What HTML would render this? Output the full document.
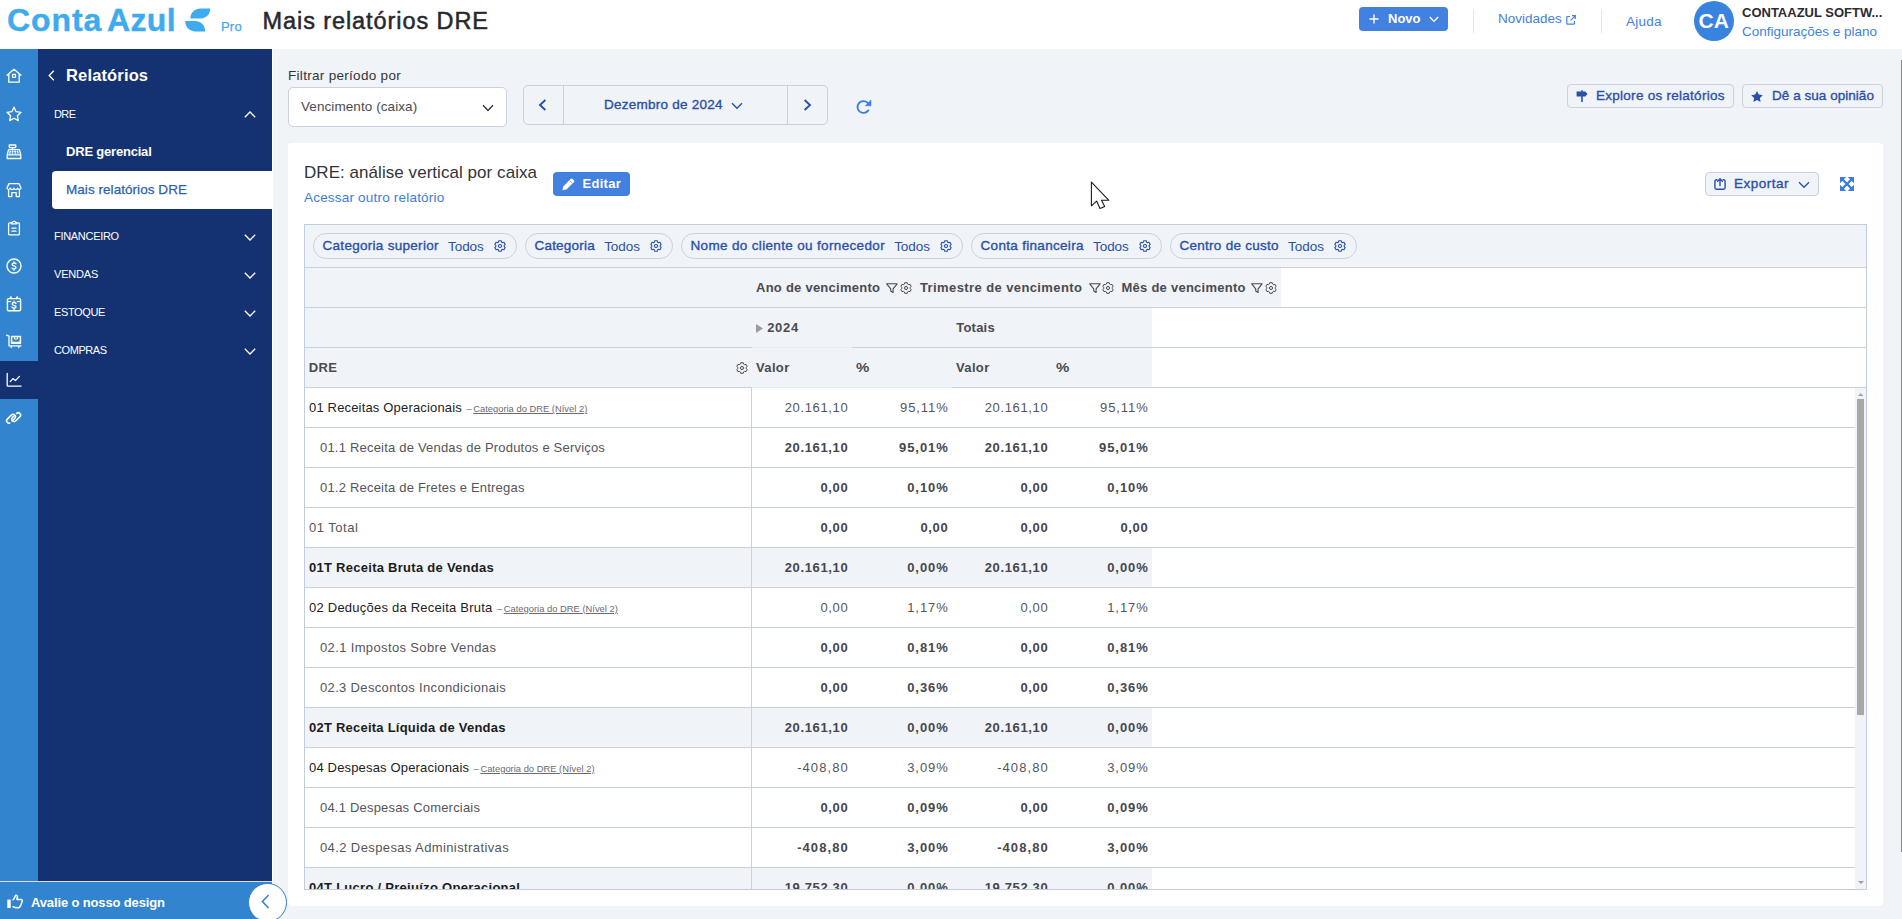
<!DOCTYPE html>
<html lang="pt-BR">
<head>
<meta charset="utf-8">
<title>Mais relatórios DRE</title>
<style>
*{box-sizing:border-box;margin:0;padding:0}
html,body{width:1902px;height:919px;overflow:hidden;background:#f0f3f8}
body{position:relative;font-family:"Liberation Sans",sans-serif;font-size:13px;color:#3c4043}
.abs,.t{position:absolute;white-space:nowrap}
.t{line-height:1}
.b{font-weight:700}
svg{position:absolute;overflow:visible}
/* ---------- header ---------- */
#header{position:absolute;left:0;top:0;width:1902px;height:49px;background:#fff}
/* ---------- sidebar ---------- */
#iconbar{position:absolute;left:0;top:49px;width:38px;height:832px;background:#3384ce}
#sidenav{position:absolute;left:38px;top:49px;width:234px;height:832px;background:#143272}
#rate{position:absolute;left:0;top:881px;width:272px;height:38px;background:#3384ce;border-top:1px solid #dcdfde}
/* ---------- main ---------- */
#card{position:absolute;left:288px;top:143px;width:1595px;height:763px;background:#fff;border-radius:4px}
#tbl{position:absolute;left:304px;top:224px;width:1563px;height:666px;border:1px solid #c3ccdb;background:#fff;overflow:hidden}
</style>
</head>
<body>
<!--HEADER-->
<div id="header">
<div class="t b" id="logo" style="left:7px;top:3px;font-size:32px;line-height:34px;color:#3fabef;letter-spacing:.9px;word-spacing:-5px;-webkit-text-stroke:.4px #3fabef">Conta <span style="letter-spacing:.35px">Azul</span></div>
<svg id="leaf" style="left:185px;top:8px" width="26" height="24" viewBox="0 0 26 24"><path d="M5.300 10.600C5.300 4.500 10 .4 16 .4H25.300C25.300 6.500 20.500 10.600 14.500 10.600zM.2 13.100H10C16 13.100 20.200 17.500 20.200 23.500H10.500C4.500 23.500 .2 19 .2 13.100z" fill="#3fabef"/></svg>
<div class="t" id="pro" style="left:221px;top:20px;font-size:13px;color:#3fa9f0;letter-spacing:.2px;-webkit-text-stroke:.25px #3fa9f0">Pro</div>
<div class="t" id="title" style="left:262.500px;top:6.500px;font-size:23.500px;line-height:28px;color:#27272e;-webkit-text-stroke:.5px #27272e;letter-spacing:.92px">Mais relatórios DRE</div>
<div class="abs" id="novo" style="left:1359px;top:7px;width:89px;height:24px;background:#4381e0;border-radius:4px"></div>
<svg style="left:1369px;top:14px" width="10" height="10" viewBox="0 0 10 10"><path d="M5 .5v9M.5 5h9" stroke="#fff" stroke-width="1.400" fill="none"/></svg>
<div class="t b" id="novot" style="left:1388px;top:12px;font-size:13px;line-height:14px;color:#fff">Novo</div>
<svg style="left:1429px;top:16px" width="10" height="7" viewBox="0 0 10 7"><path d="M.8 1l4.200 4.400L9.200 1" stroke="#fff" stroke-width="1.300" fill="none"/></svg>
<div class="abs" style="left:1473px;top:9px;width:1px;height:24px;background:#e4e9f1"></div>
<div class="t" id="novid" style="left:1498px;top:11px;font-size:13.500px;line-height:15px;color:#4381e0">Novidades</div>
<svg style="left:1566px;top:15px" width="10" height="10" viewBox="0 0 10 10"><path d="M4 1.500H1.800a1 1 0 0 0-1 1v5.700a1 1 0 0 0 1 1h5.700a1 1 0 0 0 1-1V6M6 .7h3.300V4M9.200.8L4.600 5.400" stroke="#4381e0" stroke-width="1.200" fill="none"/></svg>
<div class="abs" style="left:1601px;top:9px;width:1px;height:24px;background:#e4e9f1"></div>
<div class="t" id="ajuda" style="left:1626px;top:14px;font-size:13.500px;line-height:15px;color:#4381e0;letter-spacing:.25px">Ajuda</div>
<div class="abs" id="avatar" style="left:1694px;top:1px;width:40px;height:40px;border-radius:50%;background:#3882e0"></div>
<div class="t b" id="ca" style="left:1698.500px;top:10px;font-size:21px;line-height:22px;color:#fff">CA</div>
<div class="t b" id="comp" style="left:1742px;top:6px;font-size:13px;line-height:14px;color:#2b2b33">CONTAAZUL SOFTW...</div>
<div class="t" id="conf" style="left:1742px;top:24px;font-size:13.500px;line-height:15px;color:#4381e0">Configurações e plano</div>
</div>
<!--SIDEBAR-->
<div id="iconbar">
<svg style="left:6px;top:19px" width="16" height="16" viewBox="0 0 16 16" fill="none" stroke="#fff" stroke-width="1.3" stroke-linejoin="round" stroke-linecap="round"><path d="M1 7.200L8 1.300l7 5.900M2.800 6v8.200h10.400V6"/><rect x="6.500" y="6.300" width="3" height="3" rx=".6"/></svg>
<svg style="left:6px;top:57px" width="16" height="16" viewBox="0 0 16 16" fill="none" stroke="#fff" stroke-width="1.3" stroke-linejoin="round" stroke-linecap="round"><path d="M8 1.200l2.100 4.500 4.900.6-3.600 3.400.9 4.900L8 12.200l-4.300 2.400.9-4.900L1 6.300l4.900-.6z"/></svg>
<svg style="left:6px;top:95px" width="16" height="16" viewBox="0 0 16 16" fill="none" stroke="#fff" stroke-width="1.3" stroke-linejoin="round" stroke-linecap="round"><rect x="3.200" y="1" width="6.600" height="2.600" rx=".5"/><path d="M6.500 3.600v2M2.600 5.600h10.800l1.400 5.200H1.200zM1.200 10.800h13.600v3.700H1.200zM4 7.400h.6M6.400 7.400H7M8.800 7.400h.6M11.200 7.400h.6M3.600 9h.6M6.200 9h.6M9 9h.6M11.600 9h.6"/></svg>
<svg style="left:6px;top:133px" width="16" height="16" viewBox="0 0 16 16" fill="none" stroke="#fff" stroke-width="1.3" stroke-linejoin="round" stroke-linecap="round"><path d="M3 1.600h10l2 4.200c0 2-2.600 2-3.400.4-.8 1.800-2.800 1.800-3.600 0-.8 1.800-2.800 1.800-3.600 0C3.600 7.800 1 7.800 1 5.800zM2.600 7.600v7h3.200v-4h4.400v4h3.200v-7"/></svg>
<svg style="left:6px;top:171px" width="16" height="16" viewBox="0 0 16 16" fill="none" stroke="#fff" stroke-width="1.3" stroke-linejoin="round" stroke-linecap="round"><path d="M5.400 2.800H3.600a1 1 0 0 0-1 1v10.100a1 1 0 0 0 1 1h8.800a1 1 0 0 0 1-1V3.800a1 1 0 0 0-1-1h-1.800M5.400 3.800V2.600l1.200-.4C6.800 1 9.200 1 9.400 2.200l1.200.4v1.200zM6 8.200h4M6 11.200h4"/></svg>
<svg style="left:6px;top:209px" width="16" height="16" viewBox="0 0 16 16" fill="none" stroke="#fff" stroke-width="1.3" stroke-linejoin="round" stroke-linecap="round"><circle cx="8" cy="8" r="7" stroke-width="1.400"/><path d="M10 5.800C9.400 4.600 6.200 4.700 6.200 6.400c0 1.900 3.800 1.100 3.800 3.100 0 1.700-3.400 1.800-4 .5M8 3.800v1M8 11.200v1" stroke-width="1.350"/></svg>
<svg style="left:6px;top:247px" width="16" height="16" viewBox="0 0 16 16" fill="none" stroke="#fff" stroke-width="1.3" stroke-linejoin="round" stroke-linecap="round"><rect x="1.400" y="2.600" width="13.200" height="12.200" rx="1.200" stroke-width="1.400"/><path d="M4.800 .4v2.400M11.200 .4v2.400" stroke-width="2" stroke-linecap="butt"/><path d="M1.400 5.600h3.400M11.200 5.600h3.400" stroke-width="1"/><path d="M10 7.400C9.400 6.100 6.200 6.200 6.200 7.900c0 1.800 3.800 1 3.800 2.900 0 1.600-3.400 1.600-4 .3M8 5.200v1.200M8 12.200v1.200" stroke-width="1.350"/></svg>
<svg style="left:6px;top:285px" width="16" height="16" viewBox="0 0 16 16" fill="none" stroke="#fff" stroke-width="1.3" stroke-linejoin="round" stroke-linecap="round"><path d="M.6 1.200l2.400 1v9.600h12M5.200 13.600v-1.600M12.800 13.600v-1.600"/><rect x="5.600" y="2.400" width="8.800" height="6.800" stroke-width="1.500"/><path d="M8.600 2.400v2.600h2.800V2.400" stroke-width="1"/><path d="M5.600 8.600h8.800" stroke-width="1.600"/></svg>
<div class="abs" style="left:0;top:312px;width:38px;height:38px;background:#143272"></div>
<svg style="left:6px;top:323px" width="16" height="16" viewBox="0 0 16 16" fill="none" stroke="#fff" stroke-width="1.3" stroke-linejoin="round" stroke-linecap="round"><path d="M1.200 1.400v12a.8.800 0 0 0 .8.800h13M4.200 9.600l2.800-3 2.400 2 4-4.200"/></svg>
<svg style="left:6px;top:361px" width="16" height="16" viewBox="0 0 16 16" fill="none" stroke="#fff" stroke-width="1.3" stroke-linejoin="round" stroke-linecap="round"><g stroke-width="1.500" stroke-linecap="round"><rect x="-5.200" y="-2.350" width="10.400" height="4.700" rx="2.350" transform="translate(5 8.800) rotate(-45)" stroke-dasharray="15.800 3.200 20"/><rect x="-5.200" y="-2.350" width="10.400" height="4.700" rx="2.350" transform="translate(10.200 7.100) rotate(-45)" stroke-dasharray="2.400 3.200 40"/></g></svg>
</div>
<div id="sidenav">
<svg style="left:10px;top:21px" width="7" height="11" viewBox="0 0 7 11"><path d="M5.800.8L1.200 5.500l4.600 4.700" stroke="#fff" stroke-width="1.300" fill="none"/></svg>
<div class="t b" id="relat" style="left:28px;top:17px;font-size:16.500px;line-height:18px;color:#fff;letter-spacing:.15px">Relatórios</div>
<div class="t" id="dre" style="left:16px;top:59px;font-size:11px;line-height:13px;color:#fff;letter-spacing:-.6px">DRE</div>
<svg style="left:206px;top:62px" width="12" height="7" viewBox="0 0 12 7"><path d="M.8 6.200L6 1l5.200 5.200" stroke="#fff" stroke-width="1.300" fill="none"/></svg>
<div class="t b" id="dreg" style="left:28px;top:95px;font-size:13px;line-height:15px;color:#fff;letter-spacing:-.2px">DRE gerencial</div>
<div class="abs" id="sel" style="left:14px;top:122px;width:220px;height:38px;background:#fff;border-radius:4px 0 0 4px"></div>
<div class="t" id="mais" style="left:28px;top:133px;font-size:13.500px;line-height:15px;color:#2c5fb3;letter-spacing:.05px;-webkit-text-stroke:.25px #2c5fb3">Mais relatórios DRE</div>
<div class="t" id="fin" style="left:16px;top:181px;font-size:11px;line-height:13px;color:#fff;letter-spacing:-.3px">FINANCEIRO</div>
<svg style="left:206px;top:185px" width="12" height="7" viewBox="0 0 12 7"><path d="M.8.800L6 6l5.200-5.200" stroke="#fff" stroke-width="1.300" fill="none"/></svg>
<div class="t" id="ven" style="left:16px;top:219px;font-size:11px;line-height:13px;color:#fff;letter-spacing:-.2px">VENDAS</div>
<svg style="left:206px;top:223px" width="12" height="7" viewBox="0 0 12 7"><path d="M.8.800L6 6l5.200-5.200" stroke="#fff" stroke-width="1.300" fill="none"/></svg>
<div class="t" id="est" style="left:16px;top:257px;font-size:11px;line-height:13px;color:#fff;letter-spacing:-.38px">ESTOQUE</div>
<svg style="left:206px;top:261px" width="12" height="7" viewBox="0 0 12 7"><path d="M.8.800L6 6l5.200-5.200" stroke="#fff" stroke-width="1.300" fill="none"/></svg>
<div class="t" id="com" style="left:16px;top:295px;font-size:11px;line-height:13px;color:#fff;letter-spacing:-.42px">COMPRAS</div>
<svg style="left:206px;top:299px" width="12" height="7" viewBox="0 0 12 7"><path d="M.8.800L6 6l5.200-5.200" stroke="#fff" stroke-width="1.300" fill="none"/></svg>
</div>
<div class="abs" style="left:272px;top:49px;width:1px;height:870px;background:#fff"></div>
<div id="rate">
<svg style="left:7px;top:12.200px" width="16" height="15" viewBox="0 0 16 15" fill="none" stroke="#fff" stroke-width="1.450" stroke-linejoin="round"><path d="M5.600 6.400C7.400 5.400 7.800 3 8.600 1.200c1.400-.2 2.200 1 1.800 2.400L9.800 5.400h4c1.200 0 1.800.8 1.400 1.800-.2.600-.4.800-.4 1.200 0 .6-.2 1-.6 1.400.2.800-.2 1.400-.8 1.800-.2 1.400-1 2.200-2.600 2.200-2 0-3.800-.2-5.200-1.400"/><rect x=".3" y="5.600" width="3.400" height="8.400" fill="#fff" stroke="none"/></svg>
<div class="t b" id="avalie" style="left:31px;top:13px;font-size:13px;line-height:15px;color:#fff;letter-spacing:-.14px">Avalie o nosso design</div>
</div>
<div class="abs" id="collapse" style="left:247.500px;top:882.500px;width:39.500px;height:39.500px;border-radius:50%;background:#fff;border:1.500px solid #2f7fcb"></div>
<svg style="left:261px;top:894px" width="9" height="15" viewBox="0 0 9 15"><path d="M7.600 1L1.400 7.500l6.200 6.500" stroke="#3384ce" stroke-width="1.600" fill="none"/></svg>
<!--MAIN-->
<div id="main">
<div class="t" id="filtrar" style="left:288px;top:68px;font-size:13.500px;line-height:15px;color:#33333a;letter-spacing:.3px">Filtrar período por</div>
<div class="abs" id="selbox" style="left:288px;top:87px;width:219px;height:40px;background:#fff;border:1px solid #c9d1de;border-radius:5px"></div>
<div class="t" id="venc" style="left:301px;top:99px;font-size:13.500px;line-height:15px;color:#4a4a50;letter-spacing:.08px">Vencimento (caixa)</div>
<svg style="left:482px;top:104px" width="12" height="8" viewBox="0 0 12 8"><path d="M1 1.200l5 5.200 5-5.200" stroke="#33333a" stroke-width="1.400" fill="none"/></svg>
<div class="abs" id="datenav" style="left:523px;top:85px;width:305px;height:40px;border:1px solid #c9d1de;border-radius:5px"></div>
<div class="abs" style="left:563px;top:86px;width:1px;height:38px;background:#c9d1de"></div>
<div class="abs" style="left:787px;top:86px;width:1px;height:38px;background:#c9d1de"></div>
<svg style="left:538px;top:99px" width="9" height="12" viewBox="0 0 9 12"><path d="M7.400 1L2 6l5.400 5" stroke="#2a50a8" stroke-width="1.900" fill="none"/></svg>
<svg style="left:803px;top:99px" width="9" height="12" viewBox="0 0 9 12"><path d="M1.600 1L7 6l-5.400 5" stroke="#2a50a8" stroke-width="1.900" fill="none"/></svg>
<div class="t" id="dez" style="left:604px;top:97px;line-height:15px;color:#2a50a8;font-weight:400;font-size:13.500px;-webkit-text-stroke:.35px #2a50a8;letter-spacing:.24px">Dezembro de 2024</div>
<svg style="left:731px;top:102px" width="12" height="8" viewBox="0 0 12 8"><path d="M1 1.200l5 5 5-5" stroke="#2a50a8" stroke-width="1.400" fill="none"/></svg>
<svg style="left:856px;top:99px" width="16" height="16" viewBox="0 0 16 16"><path d="M11.570 3.830A5.900 5.900 0 1 0 12.230 11.380" stroke="#3b7ddd" stroke-width="1.900" fill="none" stroke-linecap="round"/><path d="M15 1v5.800H9.300z" fill="#3b7ddd" stroke="#3b7ddd" stroke-width=".5" stroke-linejoin="round"/></svg>
<div class="abs" id="btn1" style="left:1567px;top:84px;width:167px;height:24px;border:1px solid #c9d1de;border-radius:4px"></div>
<svg style="left:1576px;top:90px" width="12" height="12" viewBox="0 0 12 12"><path d="M.6 1.400H9.300L11.500 4 9.300 6.600H.6zM5.200 .3h1.600v1.100H5.200zM5.200 6.600h1.600v5.300H5.200z" fill="#2a50a8"/></svg>
<div class="t" id="explore" style="left:1596px;top:88px;line-height:15px;color:#2a50a8;font-weight:400;font-size:13.500px;-webkit-text-stroke:.35px #2a50a8;letter-spacing:.27px">Explore os relatórios</div>
<div class="abs" id="btn2" style="left:1742px;top:84px;width:141px;height:24px;border:1px solid #c9d1de;border-radius:4px"></div>
<svg style="left:1751px;top:91px" width="12" height="11" viewBox="0 0 12 11"><path d="M6 0l1.800 3.600 4 .6-2.900 2.800.7 4L6 9.100 2.400 11l.7-4L.2 4.200l4-.6z" fill="#2a50a8"/></svg>
<div class="t" id="opin" style="left:1772px;top:88px;line-height:15px;color:#2a50a8;font-weight:400;font-size:13.500px;-webkit-text-stroke:.35px #2a50a8;letter-spacing:.04px">Dê a sua opinião</div>
</div>
<div id="card">
<div class="t" id="ctitle" style="left:16px;top:20px;font-size:17px;line-height:20px;color:#33333a;letter-spacing:.05px">DRE: análise vertical por caixa</div>
<div class="t" id="acessar" style="left:16px;top:47px;font-size:13.500px;line-height:15px;color:#3b7ddd;letter-spacing:.2px">Acessar outro relatório</div>
<div class="abs" id="editar" style="left:265px;top:29px;width:77px;height:24px;background:#4381e0;border-radius:4px"></div>
<svg style="left:273.800px;top:34.900px" width="12.500" height="12.500" viewBox="0 0 12.500 12.500"><path d="M.3 12.300L1.300 8.400 8.500 1a1.500 1.500 0 0 1 2.100 0L11.800 2.200a1.500 1.500 0 0 1 0 2.100L4.400 11.500z" fill="#fff"/><path d="M7.400 2.400L10.500 5.500" stroke="#4381e0" stroke-width=".6"/></svg>
<div class="t b" id="editt" style="left:294.500px;top:33px;font-size:13px;line-height:15px;color:#fff;letter-spacing:.3px">Editar</div>
<div class="abs" id="export" style="left:1417px;top:29px;width:114px;height:24px;border:1px solid #c9d1de;border-radius:4px;background:#f0f3f8"></div>
<svg style="left:1426px;top:34px" width="12" height="13" viewBox="0 0 12 13" fill="none" stroke="#2a50a8" stroke-width="1.400" stroke-linecap="round" stroke-linejoin="round"><path d="M2.900 2.700H2.500a1.600 1.600 0 0 0-1.600 1.600v6.300a1.600 1.600 0 0 0 1.600 1.600h7a1.600 1.600 0 0 0 1.600-1.600V4.300a1.600 1.600 0 0 0-1.600-1.600H9.100M6 8.500V2M3.700 4.200L6 1.800l2.300 2.400"/></svg>
<div class="t" id="expt" style="left:1446px;top:33px;font-size:13.500px;line-height:15px;color:#2a50a8;letter-spacing:.5px;-webkit-text-stroke:.35px #2a50a8">Exportar</div>
<svg style="left:1510px;top:38px" width="12" height="8" viewBox="0 0 12 8"><path d="M1 1.200l5 5 5-5" stroke="#2a50a8" stroke-width="1.400" fill="none"/></svg>
<svg style="left:1552px;top:34px" width="14" height="14" viewBox="0 0 14 14"><path d="M2.500 2.500l9 9M11.500 2.500l-9 9" stroke="#3b7ddd" stroke-width="2.400"/><path d="M0 0h6.200L0 6.200zM14 0v6.200L7.800 0zM0 14V7.800L6.200 14zM14 14H7.800L14 7.800z" fill="#3b7ddd"/></svg>
</div>
<div id="tbl">
<div class="abs" style="left:0;top:0;width:1561px;height:42px;background:#f0f3f8"></div>
<div class="abs" style="left:0;top:43px;width:976px;height:39px;background:#f0f3f8"></div>
<div class="abs" style="left:0;top:83px;width:847px;height:79px;background:#f0f3f8"></div>
<div class="abs" style="left:8px;top:8px;width:203.5px;height:26px;border:1px solid #c9d1de;border-radius:13px"></div>
<div class="t" id="chip0" style="left:17.5px;top:13px;line-height:15px;color:#2a50a8;font-weight:400;font-size:13.500px;-webkit-text-stroke:.35px #2a50a8;letter-spacing:0.29px">Categoria superior<span id="chipt0" style="-webkit-text-stroke:0;letter-spacing:-.05px;margin-left:9.21px;position:relative;top:.6px">Todos</span></div>
<div class="abs" style="left:220px;top:8px;width:147.70000000000005px;height:26px;border:1px solid #c9d1de;border-radius:13px"></div>
<div class="t" id="chip1" style="left:229.5px;top:13px;line-height:15px;color:#2a50a8;font-weight:400;font-size:13.500px;-webkit-text-stroke:.35px #2a50a8;letter-spacing:0.2px">Categoria<span id="chipt1" style="-webkit-text-stroke:0;letter-spacing:-.05px;margin-left:9.30px;position:relative;top:.6px">Todos</span></div>
<div class="abs" style="left:376px;top:8px;width:281.70000000000005px;height:26px;border:1px solid #c9d1de;border-radius:13px"></div>
<div class="t" id="chip2" style="left:385.5px;top:13px;line-height:15px;color:#2a50a8;font-weight:400;font-size:13.500px;-webkit-text-stroke:.35px #2a50a8;letter-spacing:0.34px">Nome do cliente ou fornecedor<span id="chipt2" style="-webkit-text-stroke:0;letter-spacing:-.05px;margin-left:9.16px;position:relative;top:.6px">Todos</span></div>
<div class="abs" style="left:666px;top:8px;width:190.5px;height:26px;border:1px solid #c9d1de;border-radius:13px"></div>
<div class="t" id="chip3" style="left:675.5px;top:13px;line-height:15px;color:#2a50a8;font-weight:400;font-size:13.500px;-webkit-text-stroke:.35px #2a50a8;letter-spacing:0.31px">Conta financeira<span id="chipt3" style="-webkit-text-stroke:0;letter-spacing:-.05px;margin-left:9.19px;position:relative;top:.6px">Todos</span></div>
<div class="abs" style="left:865px;top:8px;width:187px;height:26px;border:1px solid #c9d1de;border-radius:13px"></div>
<div class="t" id="chip4" style="left:874.5px;top:13px;line-height:15px;color:#2a50a8;font-weight:400;font-size:13.500px;-webkit-text-stroke:.35px #2a50a8;letter-spacing:0.27px">Centro de custo<span id="chipt4" style="-webkit-text-stroke:0;letter-spacing:-.05px;margin-left:9.23px;position:relative;top:.6px">Todos</span></div>
<svg style="left:188.6px;top:15px" width="12" height="12" viewBox="0 0 12 12" fill="none" stroke="#2a50a8" stroke-width="1.1" stroke-linejoin="round"><path d="M7.52 2.03L7.23 0.69L4.77 0.69L4.48 2.03L3.33 2.70L2.01 2.28L0.79 4.41L1.80 5.34L1.80 6.66L0.79 7.59L2.01 9.72L3.33 9.30L4.48 9.97L4.77 11.31L7.23 11.31L7.52 9.97L8.67 9.30L9.99 9.72L11.21 7.59L10.20 6.66L10.20 5.34L11.21 4.41L9.99 2.28L8.67 2.70z"/><circle cx="6" cy="6" r="1.55"/></svg>
<svg style="left:344.7px;top:15px" width="12" height="12" viewBox="0 0 12 12" fill="none" stroke="#2a50a8" stroke-width="1.1" stroke-linejoin="round"><path d="M7.52 2.03L7.23 0.69L4.77 0.69L4.48 2.03L3.33 2.70L2.01 2.28L0.79 4.41L1.80 5.34L1.80 6.66L0.79 7.59L2.01 9.72L3.33 9.30L4.48 9.97L4.77 11.31L7.23 11.31L7.52 9.97L8.67 9.30L9.99 9.72L11.21 7.59L10.20 6.66L10.20 5.34L11.21 4.41L9.99 2.28L8.67 2.70z"/><circle cx="6" cy="6" r="1.55"/></svg>
<svg style="left:634.8px;top:15px" width="12" height="12" viewBox="0 0 12 12" fill="none" stroke="#2a50a8" stroke-width="1.1" stroke-linejoin="round"><path d="M7.52 2.03L7.23 0.69L4.77 0.69L4.48 2.03L3.33 2.70L2.01 2.28L0.79 4.41L1.80 5.34L1.80 6.66L0.79 7.59L2.01 9.72L3.33 9.30L4.48 9.97L4.77 11.31L7.23 11.31L7.52 9.97L8.67 9.30L9.99 9.72L11.21 7.59L10.20 6.66L10.20 5.34L11.21 4.41L9.99 2.28L8.67 2.70z"/><circle cx="6" cy="6" r="1.55"/></svg>
<svg style="left:834px;top:15px" width="12" height="12" viewBox="0 0 12 12" fill="none" stroke="#2a50a8" stroke-width="1.1" stroke-linejoin="round"><path d="M7.52 2.03L7.23 0.69L4.77 0.69L4.48 2.03L3.33 2.70L2.01 2.28L0.79 4.41L1.80 5.34L1.80 6.66L0.79 7.59L2.01 9.72L3.33 9.30L4.48 9.97L4.77 11.31L7.23 11.31L7.52 9.97L8.67 9.30L9.99 9.72L11.21 7.59L10.20 6.66L10.20 5.34L11.21 4.41L9.99 2.28L8.67 2.70z"/><circle cx="6" cy="6" r="1.55"/></svg>
<svg style="left:1029px;top:15px" width="12" height="12" viewBox="0 0 12 12" fill="none" stroke="#2a50a8" stroke-width="1.1" stroke-linejoin="round"><path d="M7.52 2.03L7.23 0.69L4.77 0.69L4.48 2.03L3.33 2.70L2.01 2.28L0.79 4.41L1.80 5.34L1.80 6.66L0.79 7.59L2.01 9.72L3.33 9.30L4.48 9.97L4.77 11.31L7.23 11.31L7.52 9.97L8.67 9.30L9.99 9.72L11.21 7.59L10.20 6.66L10.20 5.34L11.21 4.41L9.99 2.28L8.67 2.70z"/><circle cx="6" cy="6" r="1.55"/></svg>
<div class="t b" id="h_ano" style="left:451px;top:55px;font-size:13px;line-height:15px;color:#4a4a50;letter-spacing:0.25px">Ano de vencimento</div>
<svg style="left:581.2px;top:58px" width="12" height="11" viewBox="0 0 12 11" fill="none" stroke="#4a4a50" stroke-width="1.1" stroke-linejoin="round"><path d="M.7.800h10.400L7.100 5.800v3.700L4.700 8.100V5.800z"/></svg>
<svg style="left:595px;top:57px" width="12" height="12" viewBox="0 0 12 12" fill="none" stroke="#4a4a50" stroke-width="1" stroke-linejoin="round"><path d="M7.52 2.03L7.23 0.69L4.77 0.69L4.48 2.03L3.33 2.70L2.01 2.28L0.79 4.41L1.80 5.34L1.80 6.66L0.79 7.59L2.01 9.72L3.33 9.30L4.48 9.97L4.77 11.31L7.23 11.31L7.52 9.97L8.67 9.30L9.99 9.72L11.21 7.59L10.20 6.66L10.20 5.34L11.21 4.41L9.99 2.28L8.67 2.70z"/><circle cx="6" cy="6" r="1.55"/></svg>
<div class="t b" id="h_tri" style="left:615px;top:55px;font-size:13px;line-height:15px;color:#4a4a50;letter-spacing:0.4px">Trimestre de vencimento</div>
<svg style="left:783.5px;top:58px" width="12" height="11" viewBox="0 0 12 11" fill="none" stroke="#4a4a50" stroke-width="1.1" stroke-linejoin="round"><path d="M.7.800h10.400L7.100 5.800v3.700L4.700 8.100V5.800z"/></svg>
<svg style="left:796.8px;top:57px" width="12" height="12" viewBox="0 0 12 12" fill="none" stroke="#4a4a50" stroke-width="1" stroke-linejoin="round"><path d="M7.52 2.03L7.23 0.69L4.77 0.69L4.48 2.03L3.33 2.70L2.01 2.28L0.79 4.41L1.80 5.34L1.80 6.66L0.79 7.59L2.01 9.72L3.33 9.30L4.48 9.97L4.77 11.31L7.23 11.31L7.52 9.97L8.67 9.30L9.99 9.72L11.21 7.59L10.20 6.66L10.20 5.34L11.21 4.41L9.99 2.28L8.67 2.70z"/><circle cx="6" cy="6" r="1.55"/></svg>
<div class="t b" id="h_mes" style="left:816.5px;top:55px;font-size:13px;line-height:15px;color:#4a4a50;letter-spacing:0.25px">Mês de vencimento</div>
<svg style="left:946.2px;top:58px" width="12" height="11" viewBox="0 0 12 11" fill="none" stroke="#4a4a50" stroke-width="1.1" stroke-linejoin="round"><path d="M.7.800h10.400L7.100 5.800v3.700L4.700 8.100V5.800z"/></svg>
<svg style="left:959.8px;top:57px" width="12" height="12" viewBox="0 0 12 12" fill="none" stroke="#4a4a50" stroke-width="1" stroke-linejoin="round"><path d="M7.52 2.03L7.23 0.69L4.77 0.69L4.48 2.03L3.33 2.70L2.01 2.28L0.79 4.41L1.80 5.34L1.80 6.66L0.79 7.59L2.01 9.72L3.33 9.30L4.48 9.97L4.77 11.31L7.23 11.31L7.52 9.97L8.67 9.30L9.99 9.72L11.21 7.59L10.20 6.66L10.20 5.34L11.21 4.41L9.99 2.28L8.67 2.70z"/><circle cx="6" cy="6" r="1.55"/></svg>
<svg style="left:451px;top:98.5px" width="7" height="9" viewBox="0 0 7 9"><path d="M0 0l7 4.500L0 9z" fill="#9a9aa0"/></svg>
<div class="t b" id="h_2024" style="left:462.20000000000005px;top:95px;font-size:13px;line-height:15px;color:#4a4a50;letter-spacing:0.7px">2024</div>
<div class="t b" id="h_tot" style="left:651.3px;top:95px;font-size:13px;line-height:15px;color:#4a4a50;letter-spacing:0.2px">Totais</div>
<div class="t b" id="h_dre" style="left:3.8000000000000114px;top:135px;font-size:13px;line-height:15px;color:#4a4a50;letter-spacing:0.3px">DRE</div>
<svg style="left:430.70000000000005px;top:137px" width="12" height="12" viewBox="0 0 12 12" fill="none" stroke="#4a4a50" stroke-width="1" stroke-linejoin="round"><path d="M7.52 2.03L7.23 0.69L4.77 0.69L4.48 2.03L3.33 2.70L2.01 2.28L0.79 4.41L1.80 5.34L1.80 6.66L0.79 7.59L2.01 9.72L3.33 9.30L4.48 9.97L4.77 11.31L7.23 11.31L7.52 9.97L8.67 9.30L9.99 9.72L11.21 7.59L10.20 6.66L10.20 5.34L11.21 4.41L9.99 2.28L8.67 2.70z"/><circle cx="6" cy="6" r="1.55"/></svg>
<div class="t b" id="h_v1" style="left:451px;top:135px;font-size:13px;line-height:15px;color:#4a4a50;letter-spacing:0.35px">Valor</div>
<div class="t b" id="h_p1" style="transform:scaleX(1.150);transform-origin:left;left:551px;top:135px;font-size:13px;line-height:15px;color:#4a4a50;letter-spacing:0.0px">%</div>
<div class="t b" id="h_v2" style="left:651px;top:135px;font-size:13px;line-height:15px;color:#4a4a50;letter-spacing:0.35px">Valor</div>
<div class="t b" id="h_p2" style="transform:scaleX(1.150);transform-origin:left;left:751px;top:135px;font-size:13px;line-height:15px;color:#4a4a50;letter-spacing:0.0px">%</div>
<div class="abs" style="left:0;top:42px;width:1561px;height:1px;background:#c9d1de"></div>
<div class="abs" style="left:0;top:82px;width:1561px;height:1px;background:#c9d1de"></div>
<div class="abs" style="left:0;top:122px;width:1561px;height:1px;background:#c9d1de"></div>
<div class="abs" style="left:0;top:162px;width:1561px;height:1px;background:#c9d1de"></div>
<div class="abs" style="left:447px;top:122px;width:100px;height:1px;background:#e9edf3"></div>
<div class="abs" style="left:447px;top:162px;width:200px;height:1px;background:#e4e9f0"></div>
<div class="t" id="r0" style="left:4px;top:175px;font-size:13px;line-height:15px;color:#222226;letter-spacing:.17px">01 Receitas Operacionais<span id="k0" style="font-size:9.400px;color:#6a6a70;letter-spacing:0;margin-left:4.500px"><span style="letter-spacing:-.55px">– </span><span style="text-decoration:underline">Categoria do DRE (Nível 2)</span></span></div>
<div class="t" id="n0_0" style="right:1017.65px;top:175px;font-size:13px;line-height:15px;color:#55555b;letter-spacing:0.65px">20.161,10</div>
<div class="t" id="n0_1" style="right:917.40px;top:175px;font-size:13px;line-height:15px;color:#55555b;letter-spacing:0.9px">95,11%</div>
<div class="t" id="n0_2" style="right:817.65px;top:175px;font-size:13px;line-height:15px;color:#55555b;letter-spacing:0.65px">20.161,10</div>
<div class="t" id="n0_3" style="right:717.40px;top:175px;font-size:13px;line-height:15px;color:#55555b;letter-spacing:0.9px">95,11%</div>
<div class="abs" style="left:0;top:202px;width:1550px;height:1px;background:#c9d1de"></div>
<div class="t" id="r1" style="left:15px;top:215px;font-size:13px;line-height:15px;color:#55555b;letter-spacing:.2px">01.1 Receita de Vendas de Produtos e Serviços</div>
<div class="t b" id="n1_0" style="right:1017.65px;top:215px;font-size:13px;line-height:15px;color:#46464c;letter-spacing:0.65px">20.161,10</div>
<div class="t b" id="n1_1" style="right:917.40px;top:215px;font-size:13px;line-height:15px;color:#46464c;letter-spacing:0.9px">95,01%</div>
<div class="t b" id="n1_2" style="right:817.65px;top:215px;font-size:13px;line-height:15px;color:#46464c;letter-spacing:0.65px">20.161,10</div>
<div class="t b" id="n1_3" style="right:717.40px;top:215px;font-size:13px;line-height:15px;color:#46464c;letter-spacing:0.9px">95,01%</div>
<div class="abs" style="left:0;top:242px;width:1550px;height:1px;background:#c9d1de"></div>
<div class="t" id="r2" style="left:15px;top:255px;font-size:13px;line-height:15px;color:#55555b;letter-spacing:.2px">01.2 Receita de Fretes e Entregas</div>
<div class="t b" id="n2_0" style="right:1017.65px;top:255px;font-size:13px;line-height:15px;color:#46464c;letter-spacing:0.65px">0,00</div>
<div class="t b" id="n2_1" style="right:917.40px;top:255px;font-size:13px;line-height:15px;color:#46464c;letter-spacing:0.9px">0,10%</div>
<div class="t b" id="n2_2" style="right:817.65px;top:255px;font-size:13px;line-height:15px;color:#46464c;letter-spacing:0.65px">0,00</div>
<div class="t b" id="n2_3" style="right:717.40px;top:255px;font-size:13px;line-height:15px;color:#46464c;letter-spacing:0.9px">0,10%</div>
<div class="abs" style="left:0;top:282px;width:1550px;height:1px;background:#c9d1de"></div>
<div class="t" id="r3" style="left:4px;top:295px;font-size:13px;line-height:15px;color:#55555b;letter-spacing:.5px">01 Total</div>
<div class="t b" id="n3_0" style="right:1017.65px;top:295px;font-size:13px;line-height:15px;color:#46464c;letter-spacing:0.65px">0,00</div>
<div class="t b" id="n3_1" style="right:917.65px;top:295px;font-size:13px;line-height:15px;color:#46464c;letter-spacing:0.65px">0,00</div>
<div class="t b" id="n3_2" style="right:817.65px;top:295px;font-size:13px;line-height:15px;color:#46464c;letter-spacing:0.65px">0,00</div>
<div class="t b" id="n3_3" style="right:717.65px;top:295px;font-size:13px;line-height:15px;color:#46464c;letter-spacing:0.65px">0,00</div>
<div class="abs" style="left:0;top:322px;width:1550px;height:1px;background:#c9d1de"></div>
<div class="abs" style="left:0;top:323px;width:847px;height:39px;background:#f0f3f8"></div>
<div class="t b" id="r4" style="left:4px;top:335px;font-size:13px;line-height:15px;color:#1c1c20;letter-spacing:.27px">01T Receita Bruta de Vendas</div>
<div class="t b" id="n4_0" style="right:1017.65px;top:335px;font-size:13px;line-height:15px;color:#46464c;letter-spacing:0.65px">20.161,10</div>
<div class="t b" id="n4_1" style="right:917.40px;top:335px;font-size:13px;line-height:15px;color:#46464c;letter-spacing:0.9px">0,00%</div>
<div class="t b" id="n4_2" style="right:817.65px;top:335px;font-size:13px;line-height:15px;color:#46464c;letter-spacing:0.65px">20.161,10</div>
<div class="t b" id="n4_3" style="right:717.40px;top:335px;font-size:13px;line-height:15px;color:#46464c;letter-spacing:0.9px">0,00%</div>
<div class="abs" style="left:0;top:362px;width:1550px;height:1px;background:#c9d1de"></div>
<div class="t" id="r5" style="left:4px;top:375px;font-size:13px;line-height:15px;color:#222226;letter-spacing:.23px">02 Deduções da Receita Bruta<span id="k5" style="font-size:9.400px;color:#6a6a70;letter-spacing:0;margin-left:4.500px"><span style="letter-spacing:-.55px">– </span><span style="text-decoration:underline">Categoria do DRE (Nível 2)</span></span></div>
<div class="t" id="n5_0" style="right:1017.65px;top:375px;font-size:13px;line-height:15px;color:#55555b;letter-spacing:0.65px">0,00</div>
<div class="t" id="n5_1" style="right:917.40px;top:375px;font-size:13px;line-height:15px;color:#55555b;letter-spacing:0.9px">1,17%</div>
<div class="t" id="n5_2" style="right:817.65px;top:375px;font-size:13px;line-height:15px;color:#55555b;letter-spacing:0.65px">0,00</div>
<div class="t" id="n5_3" style="right:717.40px;top:375px;font-size:13px;line-height:15px;color:#55555b;letter-spacing:0.9px">1,17%</div>
<div class="abs" style="left:0;top:402px;width:1550px;height:1px;background:#c9d1de"></div>
<div class="t" id="r6" style="left:15px;top:415px;font-size:13px;line-height:15px;color:#55555b;letter-spacing:.36px">02.1 Impostos Sobre Vendas</div>
<div class="t b" id="n6_0" style="right:1017.65px;top:415px;font-size:13px;line-height:15px;color:#46464c;letter-spacing:0.65px">0,00</div>
<div class="t b" id="n6_1" style="right:917.40px;top:415px;font-size:13px;line-height:15px;color:#46464c;letter-spacing:0.9px">0,81%</div>
<div class="t b" id="n6_2" style="right:817.65px;top:415px;font-size:13px;line-height:15px;color:#46464c;letter-spacing:0.65px">0,00</div>
<div class="t b" id="n6_3" style="right:717.40px;top:415px;font-size:13px;line-height:15px;color:#46464c;letter-spacing:0.9px">0,81%</div>
<div class="abs" style="left:0;top:442px;width:1550px;height:1px;background:#c9d1de"></div>
<div class="t" id="r7" style="left:15px;top:455px;font-size:13px;line-height:15px;color:#55555b;letter-spacing:.34px">02.3 Descontos Incondicionais</div>
<div class="t b" id="n7_0" style="right:1017.65px;top:455px;font-size:13px;line-height:15px;color:#46464c;letter-spacing:0.65px">0,00</div>
<div class="t b" id="n7_1" style="right:917.40px;top:455px;font-size:13px;line-height:15px;color:#46464c;letter-spacing:0.9px">0,36%</div>
<div class="t b" id="n7_2" style="right:817.65px;top:455px;font-size:13px;line-height:15px;color:#46464c;letter-spacing:0.65px">0,00</div>
<div class="t b" id="n7_3" style="right:717.40px;top:455px;font-size:13px;line-height:15px;color:#46464c;letter-spacing:0.9px">0,36%</div>
<div class="abs" style="left:0;top:482px;width:1550px;height:1px;background:#c9d1de"></div>
<div class="abs" style="left:0;top:483px;width:847px;height:39px;background:#f0f3f8"></div>
<div class="t b" id="r8" style="left:4px;top:495px;font-size:13px;line-height:15px;color:#1c1c20;letter-spacing:.23px">02T Receita Líquida de Vendas</div>
<div class="t b" id="n8_0" style="right:1017.65px;top:495px;font-size:13px;line-height:15px;color:#46464c;letter-spacing:0.65px">20.161,10</div>
<div class="t b" id="n8_1" style="right:917.40px;top:495px;font-size:13px;line-height:15px;color:#46464c;letter-spacing:0.9px">0,00%</div>
<div class="t b" id="n8_2" style="right:817.65px;top:495px;font-size:13px;line-height:15px;color:#46464c;letter-spacing:0.65px">20.161,10</div>
<div class="t b" id="n8_3" style="right:717.40px;top:495px;font-size:13px;line-height:15px;color:#46464c;letter-spacing:0.9px">0,00%</div>
<div class="abs" style="left:0;top:522px;width:1550px;height:1px;background:#c9d1de"></div>
<div class="t" id="r9" style="left:4px;top:535px;font-size:13px;line-height:15px;color:#222226;letter-spacing:.17px">04 Despesas Operacionais<span id="k9" style="font-size:9.400px;color:#6a6a70;letter-spacing:0;margin-left:4.500px"><span style="letter-spacing:-.55px">– </span><span style="text-decoration:underline">Categoria do DRE (Nível 2)</span></span></div>
<div class="t" id="n9_0" style="right:1017.22px;top:535px;font-size:13px;line-height:15px;color:#55555b;letter-spacing:1.08px">-408,80</div>
<div class="t" id="n9_1" style="right:917.40px;top:535px;font-size:13px;line-height:15px;color:#55555b;letter-spacing:0.9px">3,09%</div>
<div class="t" id="n9_2" style="right:817.22px;top:535px;font-size:13px;line-height:15px;color:#55555b;letter-spacing:1.08px">-408,80</div>
<div class="t" id="n9_3" style="right:717.40px;top:535px;font-size:13px;line-height:15px;color:#55555b;letter-spacing:0.9px">3,09%</div>
<div class="abs" style="left:0;top:562px;width:1550px;height:1px;background:#c9d1de"></div>
<div class="t" id="r10" style="left:15px;top:575px;font-size:13px;line-height:15px;color:#55555b;letter-spacing:.2px">04.1 Despesas Comerciais</div>
<div class="t b" id="n10_0" style="right:1017.65px;top:575px;font-size:13px;line-height:15px;color:#46464c;letter-spacing:0.65px">0,00</div>
<div class="t b" id="n10_1" style="right:917.40px;top:575px;font-size:13px;line-height:15px;color:#46464c;letter-spacing:0.9px">0,09%</div>
<div class="t b" id="n10_2" style="right:817.65px;top:575px;font-size:13px;line-height:15px;color:#46464c;letter-spacing:0.65px">0,00</div>
<div class="t b" id="n10_3" style="right:717.40px;top:575px;font-size:13px;line-height:15px;color:#46464c;letter-spacing:0.9px">0,09%</div>
<div class="abs" style="left:0;top:602px;width:1550px;height:1px;background:#c9d1de"></div>
<div class="t" id="r11" style="left:15px;top:615px;font-size:13px;line-height:15px;color:#55555b;letter-spacing:.39px">04.2 Despesas Administrativas</div>
<div class="t b" id="n11_0" style="right:1017.22px;top:615px;font-size:13px;line-height:15px;color:#46464c;letter-spacing:1.08px">-408,80</div>
<div class="t b" id="n11_1" style="right:917.40px;top:615px;font-size:13px;line-height:15px;color:#46464c;letter-spacing:0.9px">3,00%</div>
<div class="t b" id="n11_2" style="right:817.22px;top:615px;font-size:13px;line-height:15px;color:#46464c;letter-spacing:1.08px">-408,80</div>
<div class="t b" id="n11_3" style="right:717.40px;top:615px;font-size:13px;line-height:15px;color:#46464c;letter-spacing:0.9px">3,00%</div>
<div class="abs" style="left:0;top:642px;width:1550px;height:1px;background:#c9d1de"></div>
<div class="abs" style="left:0;top:643px;width:847px;height:39px;background:#f0f3f8"></div>
<div class="t b" id="r12" style="left:4px;top:655px;font-size:13px;line-height:15px;color:#1c1c20;letter-spacing:.28px">04T Lucro / Prejuízo Operacional</div>
<div class="t b" id="n12_0" style="right:1017.65px;top:655px;font-size:13px;line-height:15px;color:#46464c;letter-spacing:0.65px">19.752,30</div>
<div class="t b" id="n12_1" style="right:917.40px;top:655px;font-size:13px;line-height:15px;color:#46464c;letter-spacing:0.9px">0,00%</div>
<div class="t b" id="n12_2" style="right:817.65px;top:655px;font-size:13px;line-height:15px;color:#46464c;letter-spacing:0.65px">19.752,30</div>
<div class="t b" id="n12_3" style="right:717.40px;top:655px;font-size:13px;line-height:15px;color:#46464c;letter-spacing:0.9px">0,00%</div>
<div class="abs" style="left:0;top:682px;width:1550px;height:1px;background:#c9d1de"></div>
<div class="abs" style="left:446px;top:163px;width:1px;height:520px;background:#c9d1de"></div>
<div class="abs" style="left:1550px;top:163px;width:11px;height:502px;background:#f0f3f8"></div>
<div class="abs" style="left:1552px;top:174px;width:7px;height:316px;background:#a6a8a8"></div>
<svg style="left:1552.500px;top:168px" width="5.500" height="3" viewBox="0 0 6 3"><path d="M0 3l3-3 3 3z" fill="#a0a0a0"/></svg>
<svg style="left:1553px;top:656px" width="6" height="3" viewBox="0 0 6 3"><path d="M0 0l3 3 3-3z" fill="#a0a0a0"/></svg>
</div>
<!--OVERLAY-->
<div class="abs" id="pagescroll" style="left:1901px;top:60px;width:1px;height:792px;background:#828486"></div>
<svg id="cursor" style="left:1090px;top:181px" width="20" height="30" viewBox="0 0 20 30"><path d="M1.400 1.100V24.800L6.600 20.100 10 27.600 14.700 25.500 11.500 19.300H18.900z" fill="#fff" stroke="#1a1a26" stroke-width="1.100" stroke-linejoin="round"/></svg>
</body>
</html>
